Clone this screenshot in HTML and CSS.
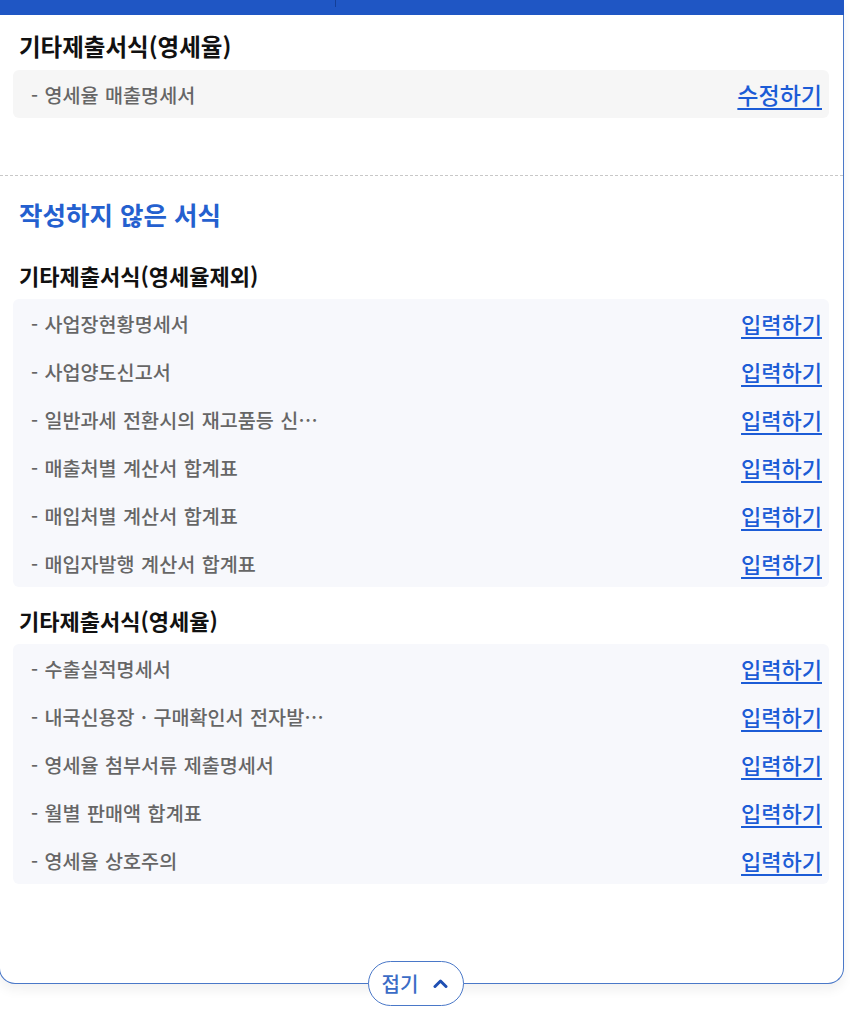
FILE: index.html
```html
<!DOCTYPE html>
<html lang="ko">
<head>
<meta charset="utf-8">
<title>서식 목록</title>
<link rel="stylesheet" href="styles.css">
</head>
<body>
<div class="card">
  <div class="topbar"></div>
  <div class="section">
    <h3 class="group-title first">기타제출서식(영세율)</h3>
    <ul class="list done">
      <li class="row"><span class="label">- 영세율 매출명세서</span><a class="link edit" href="#">수정하기</a></li>
    </ul>
  </div>
  <div class="divider"></div>
  <div class="section">
    <h2 class="sec-title">작성하지 않은 서식</h2>
    <h3 class="group-title">기타제출서식(영세율제외)</h3>
    <ul class="list">
      <li class="row"><span class="label">- 사업장현황명세서</span><a class="link" href="#">입력하기</a></li>
      <li class="row"><span class="label">- 사업양도신고서</span><a class="link" href="#">입력하기</a></li>
      <li class="row"><span class="label">- 일반과세 전환시의 재고품등 신…</span><a class="link" href="#">입력하기</a></li>
      <li class="row"><span class="label">- 매출처별 계산서 합계표</span><a class="link" href="#">입력하기</a></li>
      <li class="row"><span class="label">- 매입처별 계산서 합계표</span><a class="link" href="#">입력하기</a></li>
      <li class="row"><span class="label">- 매입자발행 계산서 합계표</span><a class="link" href="#">입력하기</a></li>
    </ul>
    <h3 class="group-title">기타제출서식(영세율)</h3>
    <ul class="list">
      <li class="row"><span class="label">- 수출실적명세서</span><a class="link" href="#">입력하기</a></li>
      <li class="row"><span class="label">- 내국신용장 · 구매확인서 전자발…</span><a class="link" href="#">입력하기</a></li>
      <li class="row"><span class="label">- 영세율 첨부서류 제출명세서</span><a class="link" href="#">입력하기</a></li>
      <li class="row"><span class="label">- 월별 판매액 합계표</span><a class="link" href="#">입력하기</a></li>
      <li class="row"><span class="label">- 영세율 상호주의</span><a class="link" href="#">입력하기</a></li>
    </ul>
  </div>
  <button class="fold" type="button">접기<svg class="chev" width="15" height="9" viewBox="0 0 15 9"><path d="M2 7.5 L7.5 2 L13 7.5" fill="none" stroke="#1f4fb3" stroke-width="3" stroke-linecap="round" stroke-linejoin="round"/></svg></button>
</div>
</body>
</html>
```

FILE: styles.css
```css
* { box-sizing: border-box; }
html, body { margin: 0; padding: 0; background: #fff; }
body {
  font-family: "Noto Sans CJK KR", "Noto Sans", sans-serif;
  color: #111;
  padding-bottom: 36px;
}
.card {
  position: relative;
  width: 845px;
  margin-left: -1px;
  border: 1px solid #4a78c8;
  border-top: none;
  border-radius: 0 0 16px 16px;
  background: #fff;
  padding-bottom: 99px;
  box-shadow: 0 6px 12px rgba(0, 0, 0, 0.06);
}
.topbar {
  position: relative;
  height: 15px;
  margin-right: -1px;
  background: #1f56c4;
}
.topbar::after {
  content: "";
  position: absolute;
  left: 335px;
  top: 0;
  width: 1px;
  height: 7px;
  background: #143f98;
}
.section {
  padding: 0 14px 0 13px;
}
.group-title {
  margin: 18px 0 9px 6px;
  font-size: 22px;
  line-height: 30px;
  font-weight: 700;
  color: #111;
}
.group-title.first {
  margin-top: 16px;
  font-size: 23.5px;
}
.sec-title {
  margin: 23px 0 0 6px;
  font-size: 25.5px;
  line-height: 30px;
  font-weight: 600;
  color: #2460cf;
}
.sec-title + .group-title { margin-top: 31px; }
.list {
  list-style: none;
  margin: 0;
  padding: 0;
  background: #f7f8fc;
  border-radius: 6px;
}
.list.done { background: #f6f6f6; }
.row {
  display: flex;
  align-items: center;
  justify-content: space-between;
  height: 48px;
  padding: 0 7px 0 18px;
}
.label {
  font-size: 19.6px;
  font-weight: 500;
  color: #666;
  white-space: nowrap;
  word-spacing: 1px;
}
.link {
  font-size: 22px;
  font-weight: 500;
  color: #1c5cd6;
  text-decoration: underline;
  text-decoration-thickness: 2px;
  text-underline-offset: 4px;
}
.link.edit { font-size: 23px; }
.divider {
  margin-top: 57px;
  border-top: 1px dashed #c8c8c8;
}
.fold {
  position: absolute;
  left: 368px;
  bottom: -23px;
  width: 96px;
  height: 45px;
  display: flex;
  align-items: center;
  justify-content: center;
  gap: 15px;
  padding: 0 2px 0 0;
  border: 1px solid #4a78c8;
  border-radius: 23px;
  background: #fff;
  font-family: "Noto Sans CJK KR", "Noto Sans", sans-serif;
  font-size: 20px;
  font-weight: 500;
  color: #3b6cc6;
  cursor: pointer;
}
.chev { display: block; }
```
